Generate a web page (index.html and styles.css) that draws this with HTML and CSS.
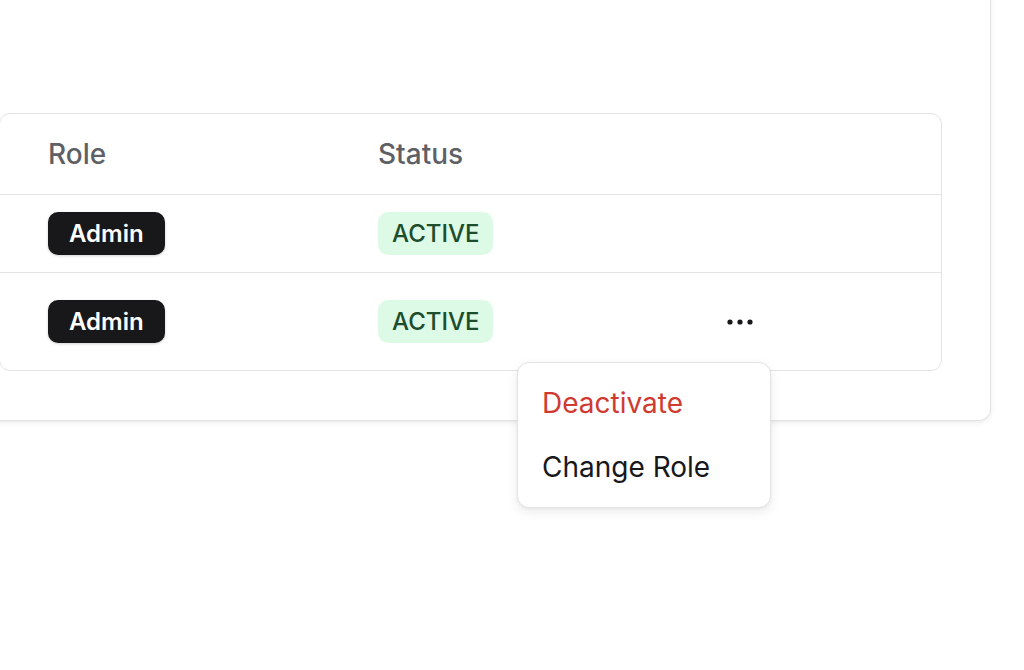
FILE: index.html
```html
<!DOCTYPE html>
<html lang="en">
<head>
<meta charset="utf-8">
<title>Users</title>
<link rel="stylesheet" href="styles.css">
</head>
<body>
<div class="card">
  <div class="table">
    <div class="row head">
      <div class="cell">Role</div>
      <div class="cell">Status</div>
      <div class="cell"></div>
    </div>
    <div class="row">
      <div class="cell"><span class="badge role">Admin</span></div>
      <div class="cell"><span class="badge status">ACTIVE</span></div>
      <div class="cell"></div>
    </div>
    <div class="row last">
      <div class="cell"><span class="badge role">Admin</span></div>
      <div class="cell"><span class="badge status">ACTIVE</span></div>
      <div class="cell">
        <div class="menu-anchor">
          <button class="icon-btn" aria-label="More actions">
            <svg width="26" height="6" viewBox="0 0 26 6" aria-hidden="true">
              <circle cx="3" cy="3" r="2.6" fill="#18181b"/>
              <circle cx="13" cy="3" r="2.6" fill="#18181b"/>
              <circle cx="23" cy="3" r="2.6" fill="#18181b"/>
            </svg>
          </button>
          <div class="menu">
            <div class="menu-item danger">Deactivate</div>
            <div class="menu-item">Change Role</div>
          </div>
        </div>
      </div>
    </div>
  </div>
</div>
</body>
</html>
```
FILE: styles.css
```css
* { box-sizing: border-box; }
html, body { margin: 0; background: #ffffff; }
body {
  font-family: Inter, "Noto Sans", "Liberation Sans", sans-serif;
  color: #18181b;
  overflow: hidden;
  height: 670px;
}
.card {
  margin: -20px 33px 0 -50px;
  padding: 132px 48px 49px 48px;
  border: 1px solid #e4e4e7;
  border-radius: 12px;
  background: #fff;
  box-shadow: 0 2px 6px rgba(0, 0, 0, 0.06), 0 1px 2px rgba(0, 0, 0, 0.04);
}
.table {
  border: 1.5px solid #e4e4e7;
  border-radius: 11px;
}
.row {
  display: grid;
  grid-template-columns: 330px 330px 1fr;
  padding-left: 24px;
  border-bottom: 1.5px solid #e4e4e7;
  align-items: center;
}
.row.last { border-bottom: none; }
.cell {
  padding: 16px 24px;
  display: flex;
  align-items: center;
  min-height: 77px;
}
.row.head .cell {
  padding: 24px;
  min-height: 80px;
  font-size: 28px;
  line-height: 32px;
  font-weight: 500;
  color: #5f5f66;
}
.row.last .cell { min-height: 97px; }
.badge {
  display: inline-block;
  height: 43px;
  line-height: 43px;
  font-size: 24px;
  border-radius: 10px;
}
.badge.role {
  background: #18181b;
  color: #ffffff;
  font-weight: 600;
  padding: 0 21px;
  box-shadow: 0 1px 3px rgba(0, 0, 0, 0.18);
}
.badge.status {
  background: #dcfae6;
  color: #1d4d2c;
  font-weight: 500;
  padding: 0 14px;
}
.menu-anchor {
  position: relative;
}
.icon-btn {
  width: 64px;
  height: 64px;
  border: none;
  background: transparent;
  display: flex;
  align-items: center;
  justify-content: center;
  padding: 0;
  border-radius: 10px;
}
.menu {
  position: absolute;
  top: calc(100% + 8px);
  right: 1px;
  width: 254px;
  padding: 8px;
  background: #ffffff;
  border: 1.5px solid #e4e4e7;
  border-radius: 12px;
  box-shadow: 0 4px 12px rgba(0, 0, 0, 0.08), 0 1px 3px rgba(0, 0, 0, 0.05);
  z-index: 10;
}
.menu-item {
  padding: 12px 16px;
  font-size: 28px;
  line-height: 40px;
  color: #18181b;
  white-space: nowrap;
}
.menu-item.danger { color: #cf3a31; }
```
